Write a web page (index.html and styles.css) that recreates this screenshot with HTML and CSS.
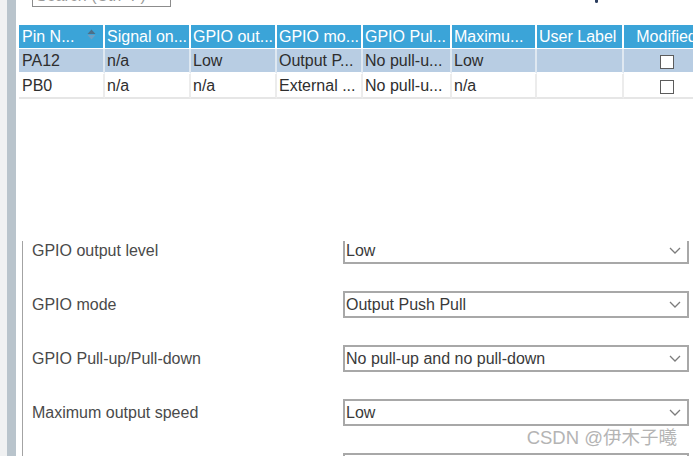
FILE: index.html
```html
<!DOCTYPE html>
<html lang="en">
<head>
    <meta charset="UTF-8">
    <meta name="viewport" content="width=device-width, initial-scale=1.0">
    <title>Pinout - GPIO Configuration</title>
    <link rel="stylesheet" href="styles.css">
</head>
<body>
    <div class="window">
        <div class="rail"></div>
        <div class="splitter"></div>

        <div class="main">
            <div class="toolbar">
                <div class="search">Search (Ctrl+F)</div>
                <span class="toolbar-mark"></span>
            </div>

            <div class="grid-wrap">
                <table class="pins">
                    <colgroup>
                        <col style="width: 86px">
                        <col style="width: 86px">
                        <col style="width: 86px">
                        <col style="width: 86px">
                        <col style="width: 89px">
                        <col style="width: 85px">
                        <col style="width: 87px">
                        <col style="width: 87px">
                    </colgroup>
                    <thead>
                        <tr>
                            <th>Pin N...
                                <svg class="sort" width="9" height="11" viewBox="0 0 9 11">
                                    <polygon points="0.5,5 4.5,0.5 8.5,5" fill="#4c6f88"/>
                                    <polygon points="0.5,6 4.5,10.5 8.5,6" fill="#6f9fc2"/>
                                </svg>
                            </th>
                            <th>Signal on...</th>
                            <th>GPIO out...</th>
                            <th>GPIO mo...</th>
                            <th>GPIO Pul...</th>
                            <th>Maximu...</th>
                            <th>User Label</th>
                            <th class="center">Modified</th>
                        </tr>
                    </thead>
                    <tbody>
                        <tr class="selected">
                            <td>PA12</td>
                            <td>n/a</td>
                            <td>Low</td>
                            <td>Output P...</td>
                            <td>No pull-u...</td>
                            <td>Low</td>
                            <td></td>
                            <td class="center"><span class="box"></span></td>
                        </tr>
                        <tr>
                            <td>PB0</td>
                            <td>n/a</td>
                            <td>n/a</td>
                            <td>External ...</td>
                            <td>No pull-u...</td>
                            <td>n/a</td>
                            <td></td>
                            <td class="center"><span class="box"></span></td>
                        </tr>
                    </tbody>
                </table>
            </div>

            <div class="config">
                <div class="props">
                    <div class="prop">
                        <span class="prop-label">GPIO output level</span>
                        <div class="select">Low
                            <svg class="chevron" width="12" height="7" viewBox="0 0 12 7"><polyline points="1,1 6,6 11,1"/></svg>
                        </div>
                    </div>
                    <div class="prop">
                        <span class="prop-label">GPIO mode</span>
                        <div class="select">Output Push Pull
                            <svg class="chevron" width="12" height="7" viewBox="0 0 12 7"><polyline points="1,1 6,6 11,1"/></svg>
                        </div>
                    </div>
                    <div class="prop">
                        <span class="prop-label">GPIO Pull-up/Pull-down</span>
                        <div class="select">No pull-up and no pull-down
                            <svg class="chevron" width="12" height="7" viewBox="0 0 12 7"><polyline points="1,1 6,6 11,1"/></svg>
                        </div>
                    </div>
                    <div class="prop">
                        <span class="prop-label">Maximum output speed</span>
                        <div class="select">Low
                            <svg class="chevron" width="12" height="7" viewBox="0 0 12 7"><polyline points="1,1 6,6 11,1"/></svg>
                        </div>
                    </div>
                    <div class="prop">
                        <span class="prop-label"></span>
                        <div class="select"></div>
                    </div>
                </div>
            </div>
        </div>

        <div class="watermark">CSDN @伊木子曦</div>
    </div>
</body>
</html>
```

FILE: styles.css
```css
body {
    font-family: "Liberation Sans", Arial, sans-serif;
    font-size: 16px;
    color: #333;
    background-color: #fff;
    margin: 0;
    padding: 0;
}

.window {
    position: relative;
    display: flex;
    width: 693px;
    height: 456px;
    overflow: hidden;
}

.rail {
    width: 7px;
    background-color: #f0f1f2;
}

.splitter {
    width: 9px;
    background-color: #b9c4cc;
}

.main {
    flex: 1;
    min-width: 0;
    display: flex;
    flex-direction: column;
    overflow: hidden;
}

/* top bar, scrolled mostly out of view */
.toolbar {
    display: flex;
    align-items: flex-start;
    height: 25px;
    flex-shrink: 0;
}

.search {
    width: 139px;
    height: 20px;
    margin: -13px 0 0 16px;
    padding: 0 3px;
    box-sizing: border-box;
    border: 1px solid #8c8c8c;
    line-height: 16px;
    color: #9a9a9a;
    white-space: nowrap;
    overflow: hidden;
}

.toolbar-mark {
    width: 3px;
    height: 3px;
    margin-left: 424px;
    background-color: #2b3d5e;
    border-radius: 0 0 2px 2px;
}

/* pin table */
.grid-wrap {
    padding-left: 3px;
    flex-shrink: 0;
}

.pins {
    width: 692px;
    table-layout: fixed;
    border-collapse: separate;
    border-spacing: 0;
}

.pins th {
    background-color: #3ba4d8;
    color: #fff;
    font-weight: normal;
    text-align: left;
    line-height: 23px;
    padding: 0 0 0 2px;
    border-right: 2px solid #fff;
    border-bottom: 1px solid #fff;
    white-space: nowrap;
    overflow: hidden;
}

.pins td {
    line-height: 23px;
    padding: 0 0 0 2px;
    color: #2e2e2e;
    border-right: 2px solid #ececec;
    border-bottom: 2px solid #e6e6e6;
    white-space: nowrap;
    overflow: hidden;
}

.pins th:first-child,
.pins td:first-child {
    padding-left: 3px;
}

.pins .selected td {
    background-color: #b8cde3;
    border-right-color: #dfe8f1;
    border-bottom-color: #fff;
}

.pins .center {
    text-align: center;
    padding-left: 0;
}

.sort {
    float: right;
    margin: 4px 7px 0 0;
}

.box {
    display: inline-block;
    width: 14px;
    height: 14px;
    box-sizing: border-box;
    border: 1px solid #5c5c5c;
    background-color: #fff;
    vertical-align: middle;
}

/* property pane, scrolled a little so the first field's top is hidden */
.config {
    flex: 1;
    margin: 142px 0 0 6px;
    padding-left: 9px;
    border-left: 1px solid #a3a3a3;
    overflow: hidden;
}

.props {
    display: flex;
    flex-direction: column;
    gap: 27px;
    margin-top: -4px;
}

.prop {
    display: flex;
    align-items: center;
    height: 27px;
}

.prop-label {
    width: 311px;
    flex-shrink: 0;
    color: #4a4a4a;
}

.select {
    display: flex;
    align-items: center;
    width: 346px;
    height: 27px;
    box-sizing: border-box;
    padding: 0 6px 0 1px;
    border: 2px solid #a8a8a8;
    color: #3a3a3a;
    white-space: nowrap;
}

.chevron {
    margin-left: auto;
    fill: none;
    stroke: #7c7c7c;
    stroke-width: 1.3;
}

.watermark {
    position: absolute;
    right: 16px;
    bottom: 9px;
    font-family: "Liberation Sans", "Noto Sans CJK SC", sans-serif;
    font-size: 18.5px;
    line-height: 18px;
    color: #b4b4b4;
}
```
